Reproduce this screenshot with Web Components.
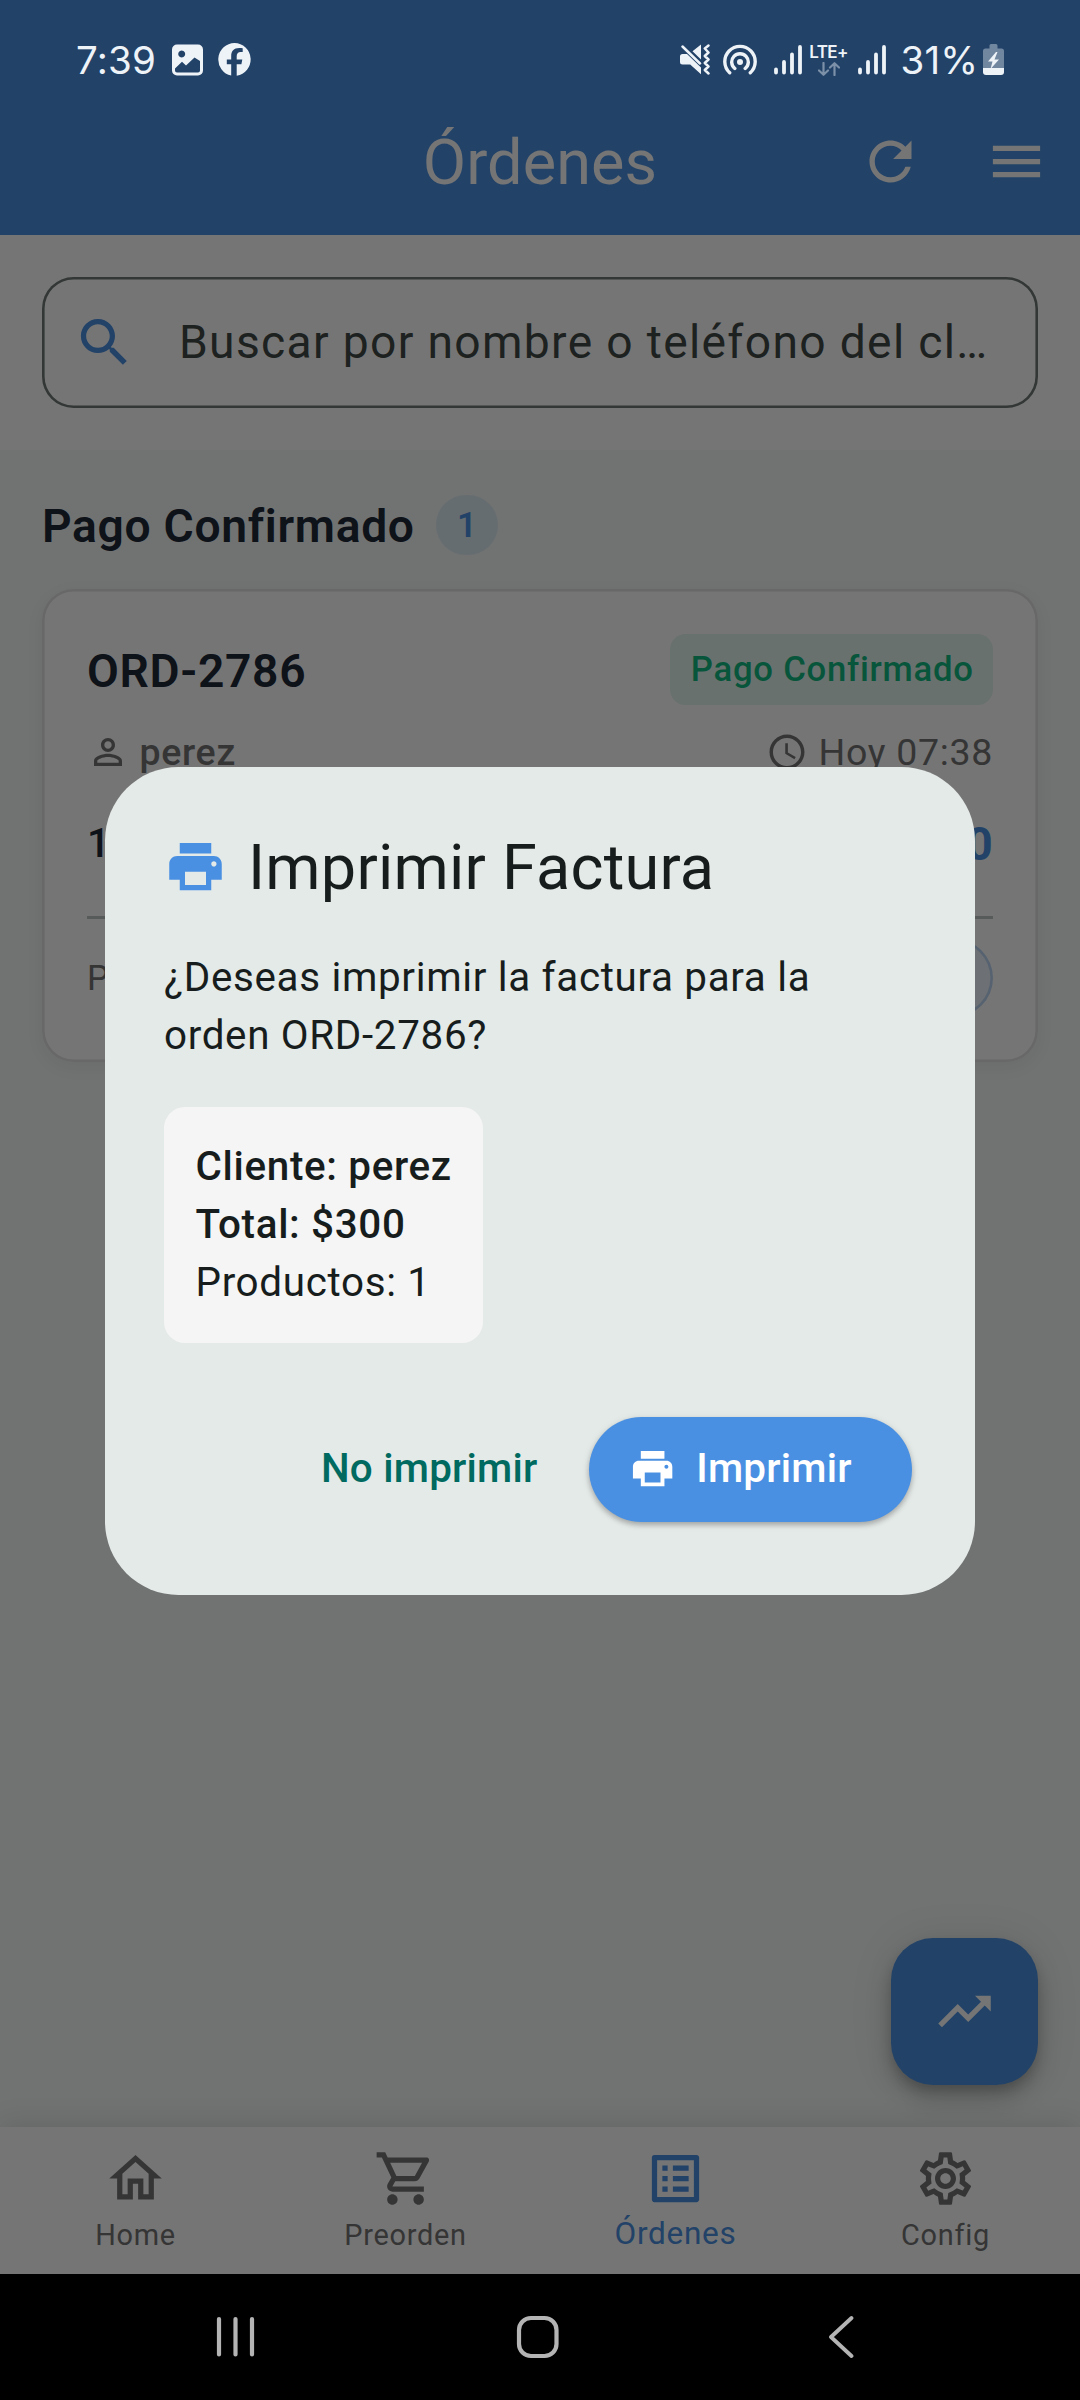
<!DOCTYPE html>
<html lang="es">
<head>
<meta charset="utf-8">
<title>Órdenes</title>
<style>
  html, body { margin: 0; padding: 0; }
  body { width: 1080px; height: 2400px; overflow: hidden; font-family: Roboto, sans-serif; }
</style>
</head>
<body>
<orders-app></orders-app>
<script>
const ICONS = {
  print: 'M19 8H5c-1.66 0-3 1.34-3 3v6h4v4h12v-4h4v-6c0-1.66-1.34-3-3-3zm-3 11H8v-5h8v5zm3-7c-.55 0-1-.45-1-1s.45-1 1-1 1 .45 1 1-.45 1-1 1zm-1-9H6v4h12V3z',
  refresh: 'M17.65 6.35C16.2 4.9 14.21 4 12 4c-4.42 0-7.99 3.58-7.99 8s3.57 8 7.99 8c3.73 0 6.84-2.55 7.73-6h-2.08c-.82 2.33-3.04 4-5.65 4-3.31 0-6-2.69-6-6s2.69-6 6-6c1.66 0 3.14.69 4.22 1.78L13 11h7V4l-2.35 2.35z',
  menu: 'M3 18h18v-2H3v2zm0-5h18v-2H3v2zm0-7v2h18V6H3z',
  search: 'M15.5 14h-.79l-.28-.27C15.41 12.59 16 11.11 16 9.5 16 5.91 13.09 3 9.5 3S3 5.91 3 9.5 5.91 16 9.5 16c1.61 0 3.09-.59 4.23-1.57l.27.28v.79l5 4.99L20.49 19l-4.99-5zm-6 0C7.01 14 5 11.99 5 9.5S7.01 5 9.5 5 14 7.01 14 9.5 11.99 14 9.5 14z',
  person: 'M12 5.9c1.16 0 2.1.94 2.1 2.1s-.94 2.1-2.1 2.1S9.9 9.16 9.9 8s.94-2.1 2.1-2.1m0 9c2.97 0 6.1 1.46 6.1 2.1v1.1H5.9V17c0-.64 3.13-2.1 6.1-2.1M12 4C9.79 4 8 5.79 8 8s1.79 4 4 4 4-1.79 4-4-1.79-4-4-4zm0 9c-2.67 0-8 1.34-8 4v3h16v-3c0-2.66-5.33-4-8-4z',
  clock: 'M11.99 2C6.47 2 2 6.48 2 12s4.47 10 9.99 10C17.52 22 22 17.52 22 12S17.52 2 11.99 2zM12 20c-4.42 0-8-3.58-8-8s3.58-8 8-8 8 3.58 8 8-3.58 8-8 8zm.5-13H11v6l5.25 3.15.75-1.23-4.5-2.67z',
  trend: 'M16 6l2.29 2.29-4.88 4.88-4-4L2 16.59 3.41 18l6-6 4 4 6.3-6.29L22 12V6z',
  home: 'M12 5.69l5 4.5V18h-2v-6H9v6H7v-7.81l5-4.5M12 3L2 12h3v8h6v-6h2v6h6v-8h3L12 3z',
  cart: 'M15.55 13c.75 0 1.41-.41 1.75-1.03l3.58-6.49c.37-.66-.11-1.48-.87-1.48H5.21l-.94-2H1v2h2l3.6 7.59-1.35 2.44C4.52 15.37 5.48 17 7 17h12v-2H7l1.1-2h7.45zM6.16 6h12.15l-2.76 5H8.53L6.16 6zM7 18c-1.1 0-1.99.9-1.99 2S5.9 22 7 22s2-.9 2-2-.9-2-2-2zm10 0c-1.1 0-1.99.9-1.99 2s.89 2 1.99 2 2-.9 2-2-.9-2-2-2z',
  list: 'M19 5v14H5V5h14m1.1-2H3.9c-.5 0-.9.4-.9.9v16.2c0 .4.4.9.9.9h16.2c.4 0 .9-.5.9-.9V3.9c0-.5-.5-.9-.9-.9zM11 7h6v2h-6V7zm0 4h6v2h-6v-2zm0 4h6v2h-6zM7 7h2v2H7zm0 4h2v2H7zm0 4h2v2H7z',
  gear: 'M19.43 12.98c.04-.32.07-.64.07-.98s-.03-.66-.07-.98l2.11-1.65c.19-.15.24-.42.12-.64l-2-3.46c-.09-.16-.26-.25-.44-.25-.06 0-.12.01-.17.03l-2.49 1c-.52-.4-1.08-.73-1.69-.98l-.38-2.65C14.46 2.18 14.25 2 14 2h-4c-.25 0-.46.18-.49.42l-.38 2.65c-.61.25-1.17.59-1.69.98l-2.49-1c-.06-.02-.12-.03-.18-.03-.17 0-.34.09-.43.25l-2 3.46c-.13.22-.07.49.12.64l2.11 1.65c-.04.32-.07.65-.07.98s.03.66.07.98l-2.11 1.65c-.19.15-.24.42-.12.64l2 3.46c.09.16.26.25.44.25.06 0 .12-.01.17-.03l2.49-1c.52.4 1.08.73 1.69.98l.38 2.65c.03.24.24.42.49.42h4c.25 0 .46-.18.49-.42l.38-2.65c.61-.25 1.17-.59 1.69-.98l2.49 1c.06.02.12.03.18.03.17 0 .34-.09.43-.25l2-3.46c.12-.22.07-.49-.12-.64l-2.11-1.65zm-1.98-1.71c.04.31.05.52.05.73s-.02.43-.05.73l-.14 1.13.89.7 1.08.84-.7 1.21-1.27-.51-1.04-.42-.9.68c-.43.32-.84.56-1.25.73l-1.06.43-.16 1.13-.2 1.35h-1.4l-.19-1.35-.16-1.13-1.06-.43c-.43-.18-.83-.41-1.23-.71l-.91-.7-1.06.43-1.27.51-.7-1.21 1.08-.84.89-.7-.14-1.13c-.03-.31-.05-.54-.05-.74s.02-.43.05-.73l.14-1.13-.89-.7-1.08-.84.7-1.21 1.27.51 1.04.42.9-.68c.43-.32.84-.56 1.25-.73l1.06-.43.16-1.13.2-1.35h1.39l.19 1.35.16 1.13 1.06.43c.43.18.83.41 1.23.71l.91.7 1.06-.43 1.27-.51.7 1.21-1.07.85-.89.7.14 1.13zM12 8c-2.21 0-4 1.79-4 4s1.79 4 4 4 4-1.79 4-4-1.79-4-4-4zm0 6c-1.1 0-2-.9-2-2s.9-2 2-2 2 .9 2 2-.9 2-2 2z'
};

function define(name, html) {
  customElements.define(name, class extends HTMLElement {
    constructor() {
      super();
      this.attachShadow({ mode: 'open' }).innerHTML = typeof html === 'function' ? html(this) : html;
    }
  });
}

customElements.define('md-icon', class extends HTMLElement {
  connectedCallback() {
    const root = this.attachShadow({ mode: 'open' });
    root.innerHTML = `<style>:host{display:block;flex:none;width:63px;height:63px}svg{display:block;width:100%;height:100%}</style>
      <svg viewBox="0 0 24 24" fill="currentColor"><path d="${ICONS[this.getAttribute('name')]}"/></svg>`;
  }
});

define('signal-bars', `
<style>:host{display:block;flex:none;width:28px;height:30px}svg{display:block}</style>
<svg width="28" height="30" viewBox="0 0 28 30" stroke="currentColor" stroke-width="3.800" stroke-linecap="round">
  <path d="M2 24.500V27.600M10 17V27.600M18 9.500V27.600M26 2V27.600"/></svg>`);

define('status-bar', `
<style>
  :host { display: flex; position: relative; z-index: 20; height: 88px; box-sizing: border-box;
    padding: 30px 76px 0 76px; color: #eef3f8; font-family: Inter, sans-serif; }
  .side { display: flex; align-items: center; height: 59px; }
  .right { margin-left: auto; }
  .time { font-size: 38.5px; letter-spacing: .2px; width: 96px; white-space: nowrap; }
  .pct { font-size: 38.5px; letter-spacing: .1px; width: 82.500px; margin-left: 15px; white-space: nowrap; }
  .lte { display: flex; flex-direction: column; align-items: center; width: 40px; margin: 0 9px 0 7px; }
  .lte b { font-size: 17px; font-weight: 600; letter-spacing: -.600px; line-height: 17px; }
  .lte svg { margin-top: 1px; }
  svg { display: block; flex: none; }
</style>
<div class="side">
  <span class="time">7:39</span>
  <svg width="31" height="32" viewBox="0 0 31 32"><path fill="currentColor" fill-rule="evenodd" d="M5 .5h21a5 5 0 0 1 5 5v21a5 5 0 0 1-5 5H5a5 5 0 0 1-5-5v-21a5 5 0 0 1 5-5zM9.700 6.500a3.500 3.500 0 1 0 .01 0zM3 24.500V26.500q0 2 2 2H26q2 0 2-2V17L22.500 13.500 14 21.500 10 17.800z"/></svg>
  <svg style="margin-left:15px" width="33" height="33" viewBox="0 0 33 33"><path fill="currentColor" d="M16.500 0a16.500 16.500 0 0 1 2.200 32.800V21.300h4.700l.9-4.800h-5.600v-3.300c0-2.500 1.200-4.200 4-4.200h2V5.300c-1-.2-2.200-.4-3.500-.4-5.400 0-8 3-8 8v3.600H8.800v4.800h4.400v11.300A16.500 16.500 0 0 1 16.500 0z"/></svg>
</div>
<div class="side right">
  <svg width="30" height="31" viewBox="0 0 30 31">
    <path fill="currentColor" d="M2.500 10H7L21 23.500V30.300L10.200 20.500H2.500Q0 20.500 0 18V12.500Q0 10 2.500 10zM12.500 7.200L21 .5V15.500z"/>
    <path fill="none" stroke="currentColor" stroke-width="2.500" stroke-linecap="round" stroke-linejoin="round" d="M2.500 2.500L20 19.500M28.500 1.500L24.800 4.500 28.500 8.500 24.800 12 28.500 15.500 24.800 19 28.500 22.500 24.800 26 28.500 29.500"/>
  </svg>
  <svg style="margin-left:13.500px" width="34" height="31" viewBox="0 0 34 31" fill="none" stroke="currentColor" stroke-width="3.400" stroke-linecap="round">
    <circle cx="17" cy="18" r="3" fill="currentColor" stroke="none"/>
    <path d="M11.800 24.500A8.300 8.300 0 1 1 22.200 24.500M6.700 28.800A15.200 15.200 0 1 1 27.300 28.800"/></svg>
  <signal-bars style="margin-left:16.500px"></signal-bars>
  <span class="lte"><b>LTE+</b>
    <svg width="22" height="14" viewBox="0 0 22 14" fill="none" stroke="#7c90a8" stroke-width="2.200" stroke-linecap="round" stroke-linejoin="round"><path d="M5.500 1V12.500M1 8.500L5.500 12.800 10 8.500M16.500 13V1.500M12 5.500L16.500 1.200 21 5.500"/></svg></span>
  <signal-bars></signal-bars>
  <span class="pct">31%</span>
  <svg width="21" height="31" viewBox="0 0 21 31">
    <path fill="#71869f" d="M6.500 1.500Q6.500 0 8 0H13Q14.500 0 14.500 1.500V4.500H18.500Q21 4.500 21 7V24H0V7Q0 4.500 2.500 4.500H6.500z"/>
    <path fill="currentColor" d="M0 24H21V28Q21 31 18 31H3Q0 31 0 28z"/>
    <path fill="currentColor" d="M13 8L5 17.500H9.500L7.500 25 16 15.500H11.500L14.500 8z"/></svg>
</div>`);

define('app-header', `
<style>
  :host { display: block; height: 235px; background: #4a90e2; color: #fff; }
  .bar { display: grid; grid-template-columns: 1fr auto 1fr; align-items: center; height: 147px; }
  h1 { margin: 0; grid-column: 2; font-size: 63px; font-weight: 400; letter-spacing: .080px; line-height: 84px; padding-top: 2px; }
  .actions { display: flex; justify-content: flex-end; gap: 63px; padding-right: 32px; }
</style>
<slot></slot>
<div class="bar"><h1>Órdenes</h1>
  <div class="actions"><md-icon name="refresh"></md-icon><md-icon name="menu"></md-icon></div></div>`);

define('search-field', `
<style>
  :host { display: block; padding: 42px; background: #fff; }
  .box { display: flex; align-items: center; height: 131px; box-sizing: border-box; padding-left: 31px;
    border-radius: 31.5px; box-shadow: inset 0 0 0 2.600px #6f7977; }
  md-icon { color: #4a90e2; }
  span { margin-left: 43px; padding-bottom: 2px; font-size: 46.2px; letter-spacing: 1.330px; color: #3f4947; white-space: nowrap; line-height: 60px; }
</style>
<div class="box"><md-icon name="search"></md-icon><span><slot></slot></span></div>`);

define('section-title', `
<style>
  :host { display: flex; align-items: center; gap: 21px; height: 60px; }
  h2 { margin: 0; font-size: 46.2px; font-weight: 600; letter-spacing: .690px; color: #1f2937; line-height: 60px; padding-top: 2px; }
  span { width: 62.500px; height: 60px; border-radius: 31px; background: rgba(74,144,226,.12); color: #4a90e2;
    font-size: 34.650px; font-weight: 600; line-height: 60px; text-align: center; }
</style>
<h2><slot></slot></h2><span><slot name="count"></slot></span>`);

define('order-card', `
<style>
  :host { display: flex; flex-direction: column; box-sizing: border-box; height: 473px; margin-top: 34px; padding: 45px;
    background: #fff; border-radius: 31.5px; box-shadow: inset 0 0 0 2.600px #e2e2e2, 0 5px 18px rgba(0,0,0,.06); }
  .row { display: flex; align-items: center; justify-content: space-between; white-space: nowrap; }
  .id { font-size: 46.2px; font-weight: 600; letter-spacing: .690px; color: #1f2937; padding-top: 2px; }
  .tag { display: block; box-sizing: border-box; width: 323px; height: 71px; line-height: 70px; border-radius: 15.750px; text-align: center; padding-left: 1.500px;
    background: rgba(16,185,129,.12); color: #10b981; font-size: 34.650px; font-weight: 500; letter-spacing: .760px; }
  .meta { margin-top: 26px; height: 42px; color: #757575; font-size: 37.500px; letter-spacing: .680px; }
  .meta span { display: flex; align-items: center; gap: 10.500px; line-height: 42px; }
  .meta .who { font-weight: 500; }
  md-icon { width: 42px; height: 42px; }
  .sum { margin-top: 43px; height: 54px; font-size: 40.4px; font-weight: 500; letter-spacing: .660px; color: #1f2937; }
  .sum b { font-size: 46.2px; font-weight: 700; letter-spacing: .300px; color: #4a90e2; padding-top: 2px; }
  hr { width: 100%; height: 2.600px; margin: 46px 0 20px; border: 0; background: #bec9c6; }
  .foot { height: 78px; font-size: 34.650px; letter-spacing: .700px; color: #757575; }
  .pill { width: 250px; height: 78px; box-sizing: border-box; border-radius: 39px; background: rgba(74,144,226,.1); box-shadow: inset 0 0 0 2.600px rgba(74,144,226,.3); }
</style>
<div class="row"><span class="id">ORD-2786</span><span class="tag">Pago Confirmado</span></div>
<div class="row meta"><span class="who"><md-icon name="person"></md-icon>perez</span><span><md-icon name="clock"></md-icon>Hoy 07:38</span></div>
<div class="row sum"><span>1</span><b>$300</b></div>
<hr>
<div class="row foot"><span>P</span><span class="pill"></span></div>`);

define('action-fab', `
<style>
  :host { display: flex; align-items: center; justify-content: center; position: absolute; right: 42px; bottom: 42px; width: 147px; height: 147px;
    border-radius: 42px; background: #4a90e2; color: #fff;
    box-shadow: 0 8px 13px -2px rgba(0,0,0,.2), 0 14px 26px rgba(0,0,0,.14), 0 3px 44px rgba(0,0,0,.1); }
</style><md-icon name="trend"></md-icon>`);

define('nav-item', el => `
<style>
  :host { display: flex; flex: 1; flex-direction: column; align-items: center; padding-top: 20px; gap: 8px;
    color: #757575; font-size: 28.900px; letter-spacing: .750px; line-height: 34px; }
  :host([selected]) { color: #4a90e2; font-size: 31.5px; letter-spacing: .700px; gap: 7px; }
  span { padding-left: 1px; }
</style>
<md-icon name="${el.getAttribute('icon')}"></md-icon><span><slot></slot></span>`);

define('bottom-nav', `
<style>:host{display:flex;position:relative;height:147px;background:#fff;box-shadow:0 -5px 26px rgba(0,0,0,.1)}</style><slot></slot>`);

define('system-nav', `
<style>
  :host { display: flex; position: relative; z-index: 20; height: 126px; box-sizing: border-box; padding-left: 84.500px; background: #000; }
  div { width: 302.500px; display: flex; align-items: center; justify-content: center; }
  svg { display: block; fill: none; stroke: #b4b4b4; stroke-linecap: round; stroke-linejoin: round; }
</style>
<div><svg width="39" height="42" viewBox="0 0 39 42" stroke-width="4.200"><path d="M3 3V38.500M19.500 3V38.500M36 3V38.500"/></svg></div>
<div><svg width="44" height="44" viewBox="0 0 44 44" stroke-width="4.200"><rect x="3" y="3" width="37.500" height="38" rx="12"/></svg></div>
<div><svg width="26" height="44" viewBox="0 0 26 44" stroke-width="3.800"><path d="M23.500 3L3 22 23.500 41"/></svg></div>`);

define('print-dialog', `
<style>
  :host { display: flex; flex-direction: column; align-items: flex-start; box-sizing: border-box; width: 870px; height: 828px;
    padding: 58px 63px 73.500px 59px; border-radius: 73.500px; background: #e4eae8; color: #171d1c;
    font-size: 40.400px; line-height: 57.750px; letter-spacing: .660px; }
  header { display: flex; align-items: center; gap: 21px; height: 84px; }
  header md-icon { color: #4a90e2; margin-bottom: 1px; }
  h2 { margin: 0; padding-top: 2px; font-size: 63px; font-weight: 400; letter-spacing: .220px; line-height: 84px; white-space: nowrap; }
  p { margin: 40px 0 0; white-space: nowrap; }
  .info { margin-top: 42px; padding: 31.500px; box-sizing: border-box; width: 319px; height: 236.250px; border-radius: 21px; background: #f5f5f5; white-space: nowrap; }
  .info b { display: block; font-weight: 500; }
  footer { display: flex; align-items: center; margin-top: auto; align-self: flex-end; gap: 51.500px; font-weight: 500; letter-spacing: .220px; }
  .no { color: #006a60; }
  .yes { display: flex; align-items: center; gap: 20px; box-sizing: border-box; width: 323px; height: 105px; padding-left: 40px;
    border-radius: 52.500px; background: #4a90e2; color: #fff; box-shadow: 0 3px 5px rgba(0,0,0,.22), 0 2px 8px rgba(0,0,0,.1); }
  .yes md-icon { width: 47.250px; height: 47.250px; }
</style>
<header><md-icon name="print"></md-icon><h2>Imprimir Factura</h2></header>
<p>¿Deseas imprimir la factura para la<br>orden ORD-2786?</p>
<div class="info"><b>Cliente: perez</b><b>Total: $300</b>Productos: 1</div>
<footer><span class="no">No imprimir</span><span class="yes"><md-icon name="print"></md-icon>Imprimir</span></footer>`);

define('orders-app', `
<style>
  :host { display: flex; flex-direction: column; position: relative; width: 1080px; height: 2400px; overflow: hidden; }
  main { position: relative; flex: 1; box-sizing: border-box; padding: 45px 42px 0; background: #f4faf8; }
  .scrim { position: absolute; inset: 0; z-index: 10; box-sizing: border-box; padding-top: 767px; display: flex; justify-content: center; align-items: flex-start; background: rgba(0,0,0,.54); }
</style>
<app-header><status-bar></status-bar></app-header>
<search-field>Buscar por nombre o teléfono del cl…</search-field>
<main>
  <section-title>Pago Confirmado<span slot="count">1</span></section-title>
  <order-card></order-card>
  <action-fab></action-fab>
</main>
<bottom-nav>
  <nav-item icon="home">Home</nav-item>
  <nav-item icon="cart">Preorden</nav-item>
  <nav-item icon="list" selected>Órdenes</nav-item>
  <nav-item icon="gear">Config</nav-item>
</bottom-nav>
<system-nav></system-nav>
<div class="scrim"><print-dialog></print-dialog></div>`);
</script>
</body>
</html>
